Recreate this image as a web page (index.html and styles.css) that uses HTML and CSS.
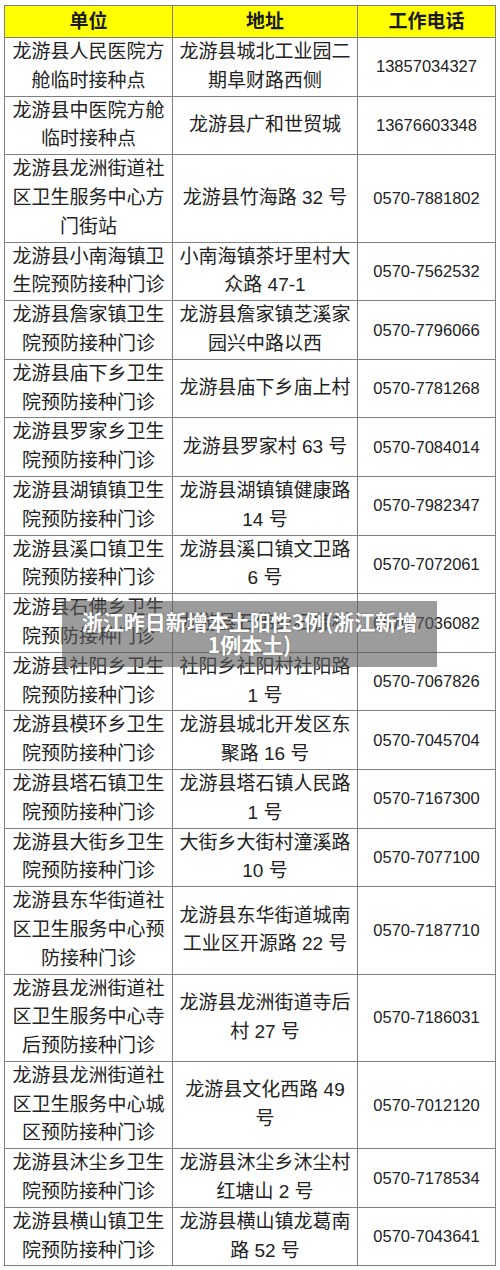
FILE: index.html
```html
<!DOCTYPE html>
<html lang="zh">
<head>
<meta charset="utf-8">
<link rel="stylesheet" href="styles.css">
</head>
<body>
<div class="wrap">
<table class="tbl">
<colgroup><col class="c1"><col class="c2"><col class="c3"></colgroup>
<thead>
<tr><th>单位</th><th>地址</th><th>工作电话</th></tr>
</thead>
<tbody>
<tr><td>龙游县人民医院方<br>舱临时接种点</td><td>龙游县城北工业园二<br>期阜财路西侧</td><td class="ph">13857034327</td></tr>
<tr><td>龙游县中医院方舱<br>临时接种点</td><td>龙游县广和世贸城</td><td class="ph">13676603348</td></tr>
<tr><td>龙游县龙洲街道社<br>区卫生服务中心方<br>门街站</td><td>龙游县竹海路 32 号</td><td class="ph">0570-7881802</td></tr>
<tr><td>龙游县小南海镇卫<br>生院预防接种门诊</td><td>小南海镇茶圩里村大<br>众路 47-1</td><td class="ph">0570-7562532</td></tr>
<tr><td>龙游县詹家镇卫生<br>院预防接种门诊</td><td>龙游县詹家镇芝溪家<br>园兴中路以西</td><td class="ph">0570-7796066</td></tr>
<tr><td>龙游县庙下乡卫生<br>院预防接种门诊</td><td>龙游县庙下乡庙上村</td><td class="ph">0570-7781268</td></tr>
<tr><td>龙游县罗家乡卫生<br>院预防接种门诊</td><td>龙游县罗家村 63 号</td><td class="ph">0570-7084014</td></tr>
<tr><td>龙游县湖镇镇卫生<br>院预防接种门诊</td><td>龙游县湖镇镇健康路<br>14 号</td><td class="ph">0570-7982347</td></tr>
<tr><td>龙游县溪口镇卫生<br>院预防接种门诊</td><td>龙游县溪口镇文卫路<br>6 号</td><td class="ph">0570-7072061</td></tr>
<tr><td>龙游县石佛乡卫生<br>院预防接种门诊</td><td>龙游县石佛乡石佛村</td><td class="ph">0570-7036082</td></tr>
<tr><td>龙游县社阳乡卫生<br>院预防接种门诊</td><td>社阳乡社阳村社阳路<br>1 号</td><td class="ph">0570-7067826</td></tr>
<tr><td>龙游县模环乡卫生<br>院预防接种门诊</td><td>龙游县城北开发区东<br>聚路 16 号</td><td class="ph">0570-7045704</td></tr>
<tr><td>龙游县塔石镇卫生<br>院预防接种门诊</td><td>龙游县塔石镇人民路<br>1 号</td><td class="ph">0570-7167300</td></tr>
<tr><td>龙游县大街乡卫生<br>院预防接种门诊</td><td>大街乡大街村潼溪路<br>10 号</td><td class="ph">0570-7077100</td></tr>
<tr><td>龙游县东华街道社<br>区卫生服务中心预<br>防接种门诊</td><td>龙游县东华街道城南<br>工业区开源路 22 号</td><td class="ph">0570-7187710</td></tr>
<tr><td>龙游县龙洲街道社<br>区卫生服务中心寺<br>后预防接种门诊</td><td>龙游县龙洲街道寺后<br>村 27 号</td><td class="ph">0570-7186031</td></tr>
<tr><td>龙游县龙洲街道社<br>区卫生服务中心城<br>区预防接种门诊</td><td>龙游县文化西路 49<br>号</td><td class="ph">0570-7012120</td></tr>
<tr><td>龙游县沐尘乡卫生<br>院预防接种门诊</td><td>龙游县沐尘乡沐尘村<br>红塘山 2 号</td><td class="ph">0570-7178534</td></tr>
<tr><td>龙游县横山镇卫生<br>院预防接种门诊</td><td>龙游县横山镇龙葛南<br>路 52 号</td><td class="ph">0570-7043641</td></tr>
</tbody>
</table>
<div class="caption">浙江昨日新增本土阳性3例(浙江新增<br>1例本土)</div>
</div>
</body>
</html>
```

FILE: styles.css
```css
html, body {
  margin: 0;
  padding: 0;
  background: #ffffff;
}
.wrap {
  position: relative;
  width: 500px;
  padding: 5px 0 0 4px;
  box-sizing: border-box;
}
.tbl {
  border-collapse: collapse;
  width: 491px;
  table-layout: fixed;
  font-family: "Liberation Sans", "Noto Sans CJK SC", sans-serif;
  color: #222222;
}
.c1 { width: 168px; }
.c2 { width: 185px; }
.c3 { width: 138px; }
.tbl th, .tbl td {
  border: 1px solid #808080;
  text-align: center;
  vertical-align: middle;
  padding: 0;
}
.tbl th {
  background: #ffff00;
  font-size: 19px;
  font-weight: bold;
  height: 31px;
  line-height: 31px;
  color: #1a1a1a;
}
.tbl td {
  font-size: 19px;
  line-height: 28.8px;
}
.tbl td.ph {
  font-size: 16.5px;
}
.caption {
  position: absolute;
  left: 62px;
  top: 601px;
  width: 375px;
  height: 66px;
  box-sizing: border-box;
  padding-top: 9px;
  background: rgba(90, 90, 90, 0.6);
  color: #ffffff;
  font-family: "Noto Sans CJK SC", sans-serif;
  font-weight: bold;
  font-size: 21px;
  line-height: 23px;
  text-align: center;
  text-shadow: 0 0 2px rgba(0,0,0,0.3);
}
```
